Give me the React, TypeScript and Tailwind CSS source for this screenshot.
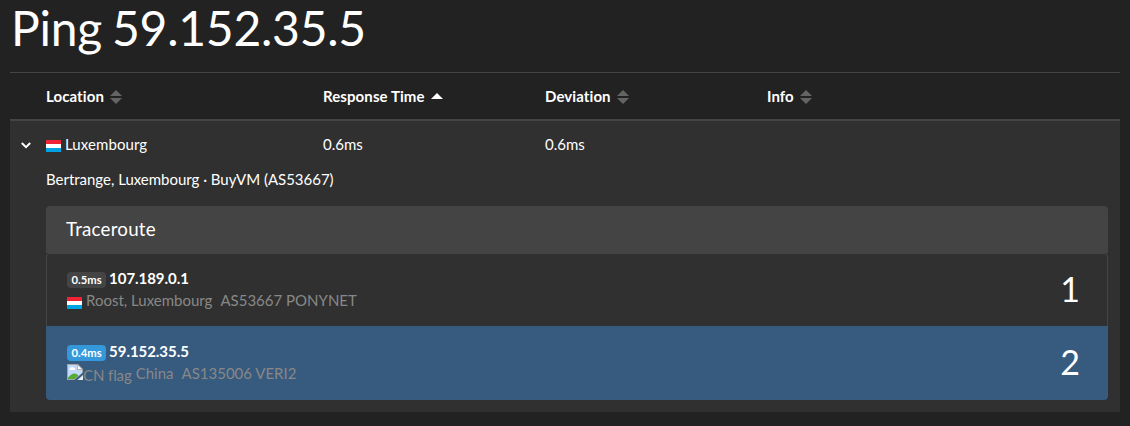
type SortState = 'none' | 'asc';

const columns: { label: string; sort: SortState; width: string }[] = [
  { label: 'Location', sort: 'none', width: 'w-[277px]' },
  { label: 'Response Time', sort: 'asc', width: 'w-[222px]' },
  { label: 'Deviation', sort: 'none', width: 'w-[222px]' },
  { label: 'Info', sort: 'none', width: 'w-[222px]' },
];

const hops = [
  { id: 1, time: '0.5ms', ip: '107.189.0.1', flag: 'lu', place: 'Roost, Luxembourg', asn: 'AS53667 PONYNET', active: false },
  { id: 2, time: '0.4ms', ip: '59.152.35.5', flag: 'cn', place: 'China', asn: 'AS135006 VERI2', active: true },
];

function SortIcon({ sort }: { sort: SortState }) {
  if (sort === 'asc') {
    return (
      <svg width="12" height="14" viewBox="0 0 12 14" className="ml-1.5 mt-0.5" fill="#fff">
        <path d="M0 9 L6 3 L12 9Z" />
      </svg>
    );
  }
  return (
    <svg width="12" height="14" viewBox="0 0 12 14" className="ml-1.5 mt-0.5" fill="#646464">
      <path d="M0 6 L6 0 L12 6Z" />
      <path d="M0 8 L6 14 L12 8Z" />
    </svg>
  );
}

function LuxembourgFlag({ className }: { className: string }) {
  return (
    <svg width="15" height="12" viewBox="0 0 15 12" className={`mr-1 shrink-0 ${className}`}>
      <rect width="15" height="4" fill="#ee2436" />
      <rect y="4" width="15" height="4" fill="#fff" />
      <rect y="8" width="15" height="4" fill="#00a2e1" />
    </svg>
  );
}

// Browser style placeholder for a flag that did not load
function MissingFlag({ alt }: { alt: string }) {
  return (
    <span className="mr-1 flex h-[22px]">
      <svg width="16" height="16" viewBox="0 0 16 16" className="mt-0.5 shrink-0">
        <path d="M0 0H11L16 5V10L10 16H0Z" fill="#a5a5a5" />
        <path d="M1 1H10V6H15V9L8 15H1Z" fill="#c3d9fb" />
        <path d="M10.4 .6L15.4 5.6H10.4Z" fill="#fff" stroke="#a5a5a5" strokeWidth=".7" />
        <path d="M2.5 6a1.5 1.5 0 0 1 1-2 2 2 0 0 1 3.5 0 1.2 1.2 0 0 1 1 2Z" fill="#fff" />
        <path d="M1 15V13.5C3 11.5 5 9.5 7.5 9.5C9.5 9.5 10.5 10.5 11.5 11.8L8 15Z" fill="#58aa36" />
        <path d="M7.5 16L16 8.5V10.5L10 16Z" fill="#375a7f" />
        <path d="M10.5 16L16 11V16Z" fill="#e9eef7" />
      </svg>
      <span className="mt-0.5 tracking-[-0.1px]">{alt}</span>
    </span>
  );
}

export default function App() {
  return (
    <div className="h-[426px] overflow-hidden bg-[#222] px-2.5 font-['Lato',sans-serif] text-[15px] leading-[22.5px] text-white">
      <h1 className="h-[72px] pl-px text-[48px] leading-[55px] font-normal tracking-[-0.25px] [word-spacing:-2px]">
        Ping 59.152.35.5
      </h1>

      <div className="flex h-[49px] items-center border-t border-b-2 border-[#444] pl-9 font-bold">
        {columns.map((column) => (
          <div key={column.label} className={`flex items-center tracking-[0.09px] ${column.width}`}>
            {column.label}
            <SortIcon sort={column.sort} />
          </div>
        ))}
      </div>

      <div className="h-[291px] bg-[#303030] pt-3">
        <div className="flex">
          <div className="w-9 pt-[9px] pl-[11px]">
            <svg width="10" height="7" viewBox="0 0 10 7" fill="none" stroke="#fff" strokeWidth="2">
              <path d="M.8 1L5 5.2L9.2 1" />
            </svg>
          </div>
          <div className="flex w-[277px] items-center tracking-[0.08px]">
            <LuxembourgFlag className="mt-[3px]" />
            Luxembourg
          </div>
          <div className="w-[222px]">0.6ms</div>
          <div>0.6ms</div>
        </div>

        <div className="pr-3 pl-9">
          <p className="mt-3 tracking-[-0.02px]">Bertrange, Luxembourg · BuyVM (AS53667)</p>

          <div className="mt-4 h-[194px] overflow-hidden rounded">
            <h5 className="h-[47px] bg-[#444] px-5 pt-3 text-[18.75px] leading-[22.5px] tracking-[0.2px]">Traceroute</h5>
            {hops.map((hop) => (
              <div
                key={hop.id}
                className={
                  hop.active
                    ? 'flex h-[74px] items-center justify-between bg-[#375a7f] pr-7 pb-0.5 pl-[21px]'
                    : 'flex h-[73px] items-center justify-between rounded-t border border-b-0 border-[#444] bg-[#303030] pr-[27px] pb-0.5 pl-5'
                }
              >
                <div>
                  <div className="flex h-[22px] items-center font-bold">
                    <span
                      className={`mt-1 mr-[3px] rounded px-[4.5px] py-[2.8px] text-[11.25px] leading-[11.25px] ${
                        hop.active ? 'bg-[#3498db]' : 'bg-[#444]'
                      }`}
                    >
                      {hop.time}
                    </span>
                    <span className="tracking-[-0.05px]">{hop.ip}</span>
                  </div>
                  <div className="flex h-[22px] items-center text-[#888]">
                    {hop.flag === 'lu' ? <LuxembourgFlag className="mt-[5px]" /> : <MissingFlag alt="CN flag" />}
                    <span>{hop.place}</span>
                    <span className="ml-2">{hop.asn}</span>
                  </div>
                </div>
                <span className="pb-px text-[34px] leading-[43px]">{hop.id}</span>
              </div>
            ))}
          </div>
        </div>
      </div>
    </div>
  );
}
